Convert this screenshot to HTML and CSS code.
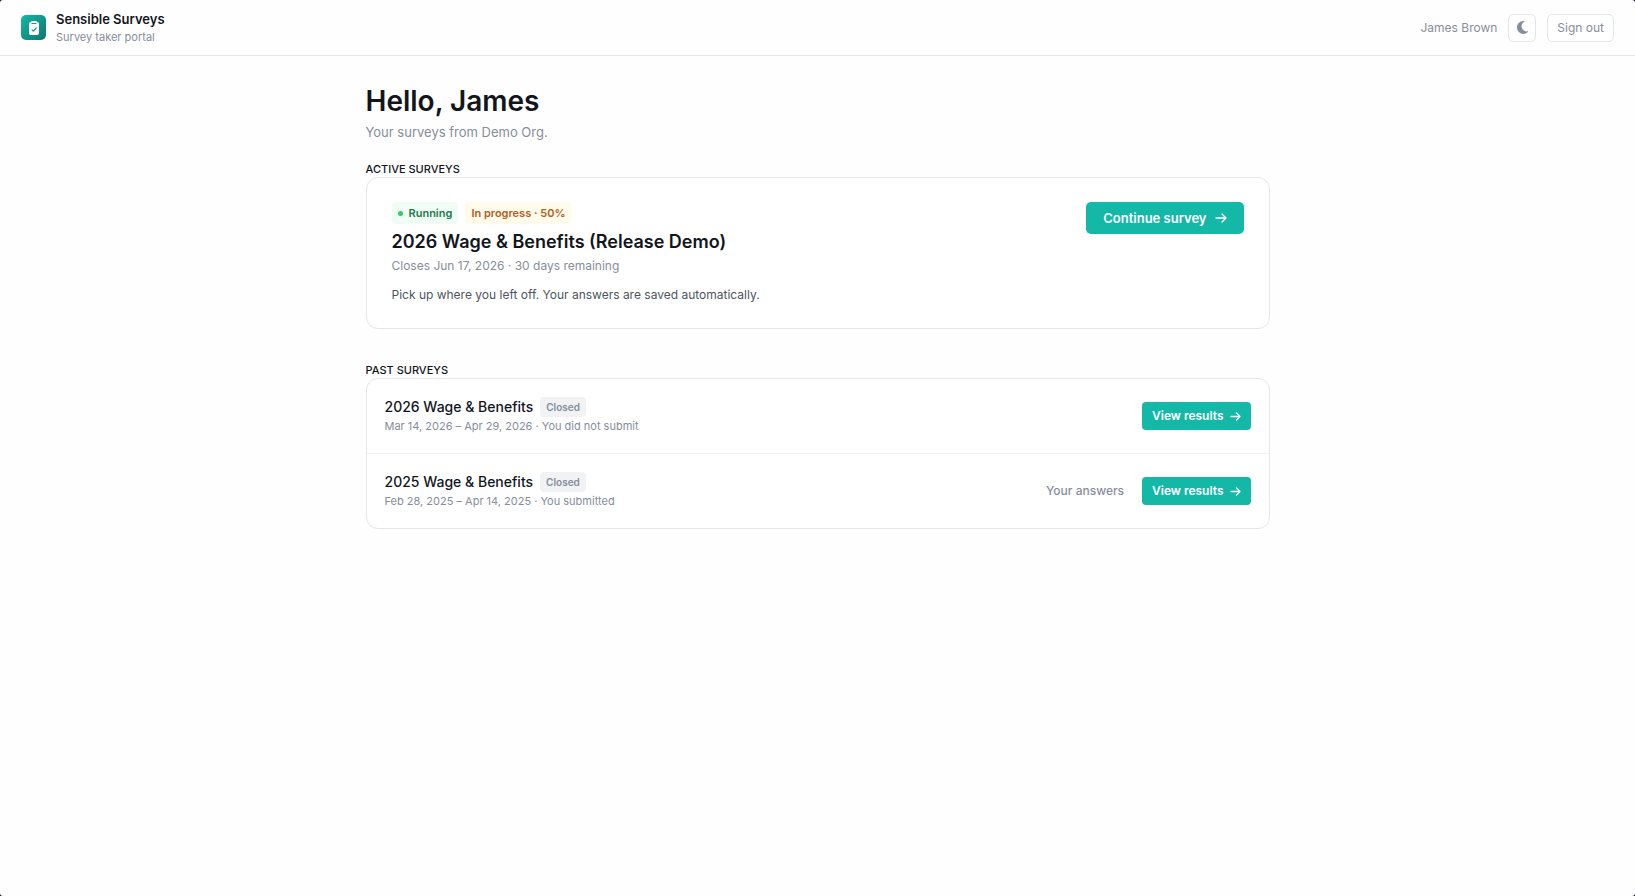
FILE: index.html
```html
<!DOCTYPE html>
<html lang="en">
<head>
	<meta charset="UTF-8">
	<meta name="viewport" content="width=device-width, initial-scale=1">
	<title>Sensible Surveys</title>
	<link rel="stylesheet" href="styles.css">
</head>
<body>
	<header class="topbar">
		<div class="brand">
			<span class="brand-logo">
				<svg width="12" height="14" viewBox="0 0 12 14" aria-hidden="true">
					<rect x="1" y="1" width="10" height="13" rx="2" fill="#fff"/>
					<rect x="3" y="0" width="6" height="3" rx="1" fill="#fff"/>
					<path d="M4 2.5h4" stroke="#14998a" stroke-width="1" stroke-linecap="round"/>
					<path d="M4 8.8l1.4 1.4L8.2 7" fill="none" stroke="#14998a" stroke-width="1.2" stroke-linecap="round" stroke-linejoin="round"/>
				</svg>
			</span>
			<div>
				<div class="brand-name">Sensible Surveys</div>
				<div class="brand-sub">Survey taker portal</div>
			</div>
		</div>
		<div class="account">
			<span class="user">James Brown</span>
			<button type="button" class="outline-btn theme-btn" aria-label="Toggle theme">
				<svg width="11" height="15" viewBox="0 0 384 512" aria-hidden="true">
					<path d="M223.5 32C100 32 0 132.3 0 256S100 480 223.5 480c60.6 0 115.5-24.2 155.8-63.4c5-4.9 6.3-12.5 3.1-18.7s-10.1-9.7-17-8.5c-9.8 1.7-19.8 2.6-30.1 2.6c-96.9 0-175.5-78.8-175.5-176c0-65.8 36-123.1 89.3-153.3c6.1-3.5 9.2-10.5 7.7-17.3s-7.3-11.9-14.3-12.5c-6.3-.5-12.6-.8-19-.8z" fill="currentColor"/>
				</svg>
			</button>
			<button type="button" class="outline-btn">Sign out</button>
		</div>
	</header>

	<main class="page">
		<h1>Hello, James</h1>
		<p class="lead">Your surveys from Demo Org.</p>

		<section>
			<h2>Active surveys</h2>
			<div class="card active-card">
				<div>
					<div class="badges">
						<span class="badge running"><i class="dot"></i>Running</span>
						<span class="badge progress">In progress · 50%</span>
					</div>
					<h3 class="active-title">2026 Wage &amp; Benefits (Release Demo)</h3>
					<p class="closes">Closes Jun 17, 2026 · 30 days remaining</p>
					<p class="note">Pick up where you left off. Your answers are saved automatically.</p>
				</div>
				<a href="#" class="btn btn-lg">Continue survey
					<svg width="12" height="10" viewBox="0 0 12 10" aria-hidden="true"><path d="M1 5h10M7 1l4 4-4 4"/></svg>
				</a>
			</div>
		</section>

		<section>
			<h2>Past surveys</h2>
			<div class="card">
				<div class="row">
					<div>
						<div class="row-head">
							<h3 class="row-title">2026 Wage &amp; Benefits</h3>
							<span class="badge closed">Closed</span>
						</div>
						<p class="row-meta">Mar 14, 2026 – Apr 29, 2026 · You did not submit</p>
					</div>
					<div class="row-actions">
						<a href="#" class="btn">View results
							<svg width="11" height="9" viewBox="0 0 12 10" aria-hidden="true"><path d="M1 5h10M7 1l4 4-4 4"/></svg>
						</a>
					</div>
				</div>
				<div class="row">
					<div>
						<div class="row-head">
							<h3 class="row-title">2025 Wage &amp; Benefits</h3>
							<span class="badge closed">Closed</span>
						</div>
						<p class="row-meta">Feb 28, 2025 – Apr 14, 2025 · You submitted</p>
					</div>
					<div class="row-actions">
						<a href="#" class="answers">Your answers</a>
						<a href="#" class="btn">View results
							<svg width="11" height="9" viewBox="0 0 12 10" aria-hidden="true"><path d="M1 5h10M7 1l4 4-4 4"/></svg>
						</a>
					</div>
				</div>
			</div>
		</section>
	</main>
</body>
</html>
```
FILE: styles.css
```css
*{
	box-sizing: border-box;
	margin: 0;
	padding: 0;
}
html{
	background: #15172b;
}
body{
	min-height: 100vh;
	background: #fefefe;
	border-radius: 3px;
	color: #12161c;
	font-family: Inter, "Liberation Sans", sans-serif;
	font-size: 13px;
	line-height: 20px;
}
a{
	text-decoration: none;
}
.topbar{
	display: flex;
	align-items: center;
	justify-content: space-between;
	height: 56px;
	padding: 0 21px;
	border-bottom: 1px solid #e4e6e8;
}
.brand{
	display: flex;
	align-items: center;
	gap: 10px;
}
.brand-logo{
	display: flex;
	align-items: center;
	justify-content: center;
	width: 25px;
	height: 25px;
	border-radius: 5px;
	background: linear-gradient(135deg, #14b8a6, #0f766e);
}
.brand-name{
	font-size: 13px;
	font-weight: 600;
	line-height: 18px;
}
.brand-sub{
	color: #868e9c;
	font-size: 11px;
	line-height: 18px;
}
.account{
	display: flex;
	align-items: center;
	gap: 11px;
}
.user{
	color: #868e9c;
	font-size: 12px;
}
.outline-btn{
	display: flex;
	align-items: center;
	justify-content: center;
	height: 28px;
	padding: 0 9px;
	border: 1px solid #e4e6e8;
	border-radius: 5px;
	background: #fff;
	color: #868e9c;
	font-family: inherit;
	font-size: 12px;
	cursor: pointer;
}
.theme-btn{
	width: 28px;
	padding: 0;
}
.page{
	max-width: 944px;
	margin: 0 auto;
	padding: 28px 20px;
}
h1{
	font-size: 28px;
	font-weight: 600;
	line-height: 34px;
}
.lead{
	margin-top: 4px;
	color: #868e9c;
	font-size: 13px;
}
section{
	margin-top: 19px;
}
section + section{
	margin-top: 33px;
}
h2{
	font-size: 11px;
	font-weight: 500;
	line-height: 16px;
	text-transform: uppercase;
}
.card{
	border: 1px solid #e4e6e8;
	border-radius: 12px;
	background: #fff;
}
.active-card{
	display: flex;
	align-items: flex-start;
	justify-content: space-between;
	gap: 24px;
	padding: 24px 25px;
}
.badges{
	display: flex;
	gap: 7px;
}
.badge{
	display: inline-flex;
	align-items: center;
	height: 22px;
	padding: 0 6px;
	border-radius: 4px;
	font-size: 11px;
	font-weight: 600;
}
.running{
	background: #effdf5;
	color: #1f7a4d;
}
.dot{
	width: 5px;
	height: 5px;
	margin-right: 6px;
	border-radius: 50%;
	background: #2fcb6c;
}
.progress{
	background: #fffbea;
	color: #b4601d;
}
.closed{
	height: 20px;
	background: #f0f2f4;
	color: #868e9c;
	font-size: 10px;
}
.active-title{
	margin-top: 4px;
	font-size: 18px;
	font-weight: 600;
	line-height: 28px;
}
.closes{
	margin-top: 1px;
	color: #868e9c;
	font-size: 12px;
	line-height: 18px;
}
.note{
	margin-top: 11px;
	color: #4d5562;
	font-size: 12px;
	line-height: 18px;
}
.btn{
	display: inline-flex;
	align-items: center;
	gap: 6px;
	height: 28px;
	padding: 0 10px;
	border-radius: 4px;
	background: #14b8a6;
	color: #fff;
	font-size: 12px;
	font-weight: 600;
}
.btn svg{
	fill: none;
	stroke: currentColor;
	stroke-width: 1.4;
	stroke-linecap: round;
	stroke-linejoin: round;
}
.btn-lg{
	gap: 8px;
	height: 32px;
	padding: 0 17px;
	border-radius: 5px;
	font-size: 13px;
}
.row{
	display: flex;
	align-items: center;
	justify-content: space-between;
	padding: 18px;
}
.row + .row{
	border-top: 1px solid #eff1f3;
}
.row-head{
	display: flex;
	align-items: center;
	gap: 7px;
}
.row-title{
	font-size: 14px;
	font-weight: 500;
	line-height: 20px;
}
.row-meta{
	color: #868e9c;
	font-size: 11px;
	line-height: 18px;
}
.row-actions{
	display: flex;
	align-items: center;
	gap: 18px;
}
.answers{
	color: #868e9c;
	font-size: 12px;
	font-weight: 500;
}
```
